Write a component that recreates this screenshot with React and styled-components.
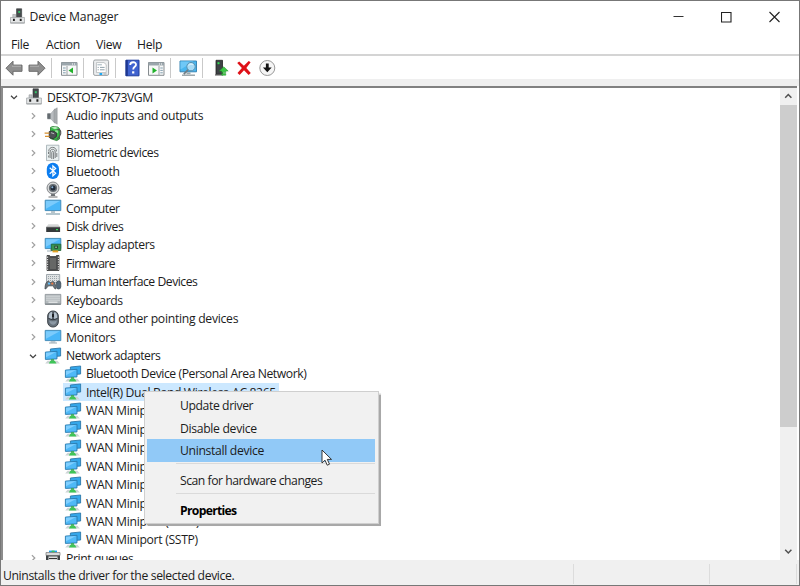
import React from 'react'
import styled, { createGlobalStyle } from 'styled-components'

const GlobalStyle = createGlobalStyle`
  * { box-sizing: border-box; }
  body {
    margin: 0;
    background: #fff;
    overflow: hidden;
  }
`

const Window = styled.div`
  position: relative;
  display: flex;
  flex-direction: column;
  width: 800px;
  height: 586px;
  border: 1px solid #777;
  background: #fff;
  color: #1c1c1c;
  font-family: "Open Sans", "Noto Sans", sans-serif;
  font-size: 12.2px;
  letter-spacing: -0.3px;
  cursor: default;
`

const TitleBar = styled.header`
  display: flex;
  align-items: center;
  height: 31px;
  padding: 0 18px 0 8px;
`

const Title = styled.span`
  flex: 1;
  margin-left: 3.5px;
  letter-spacing: -0.17px;
`

const WindowButtons = styled.div`
  display: flex;
  gap: 36px;
`

const MenuBar = styled.nav`
  display: flex;
  height: 22px;
  padding-left: 10px;
  line-height: 25px;
`

const MenuLabel = styled.span`
  width: ${(p) => p.$width}px;
`

const Toolbar = styled.div`
  display: flex;
  align-items: center;
  height: 32px;
  padding: 0 0 7px 3px;
  border-top: 2px solid #d4d4d4;
  background: linear-gradient(#fff 0 23px, #efefef 23px);
`

const ToolIcon = styled.svg`
  flex: none;
  width: ${(p) => p.$size || 18}px;
  height: 18px;
  margin-left: ${(p) => p.$gap}px;
`

const ToolSeparator = styled.i`
  width: 1px;
  height: 20px;
  margin-left: ${(p) => p.$gap}px;
  background: #c9c9c9;
`

const Body = styled.main`
  display: flex;
  flex: 1;
  min-height: 0;
  margin-right: 2px;
  border-top: 2px solid #808080;
  border-left: 2px solid #8c8c8c;
`

const Tree = styled.div`
  flex: 1;
  padding-top: 0.2px;
  overflow: hidden;
`

const Row = styled.div`
  display: flex;
  align-items: center;
  height: 18.45px;
  padding-left: ${(p) => [4, 23, 43][p.$level]}px;
  white-space: nowrap;
`

const Chevron = styled.svg`
  flex: none;
  width: 14px;
  height: 10px;
  margin-right: 4px;
  fill: none;
  stroke: ${(p) => (p.$open ? '#404040' : '#a0a0a0')};
  stroke-width: 1.25;
`

const DeviceIcon = styled.svg`
  flex: none;
  width: 18px;
  height: 18px;
`

const IconSpace = styled.i`
  flex: none;
  width: 18px;
`

const Label = styled.span`
  display: flex;
  align-items: center;
  height: 18px;
  padding: 0 3px 0 4px;
  letter-spacing: ${(p) => p.$tracking}px;
`

const Device = styled.div`
  display: flex;
  align-items: center;
  margin-left: -1px;
  padding-left: 1px;
  background: ${(p) => (p.$selected ? '#cce8ff' : 'transparent')};
`

const ScrollBar = styled.div`
  display: flex;
  flex-direction: column;
  width: 17px;
  background: #f0f0f0;
`

const ScrollArrow = styled.svg`
  flex: none;
  width: 17px;
  height: 17px;
  fill: none;
  stroke: #505050;
  stroke-width: 1.5;
`

const Thumb = styled.div`
  height: 322px;
  margin-bottom: auto;
  background: #cdcdcd;
`

const StatusBar = styled.footer`
  display: flex;
  align-items: stretch;
  height: 25px;
  padding: 4px 2px 1px 2px;
  background: #f0f0f0;
`

const StatusPane = styled.div`
  flex: ${(p) => (p.$width ? `0 0 ${p.$width}px` : '1')};
  border-right: 1px solid #dcdcdc;
  letter-spacing: -0.37px;
  line-height: 23px;
`

const ContextMenu = styled.div`
  position: absolute;
  left: 143px;
  top: 390px;
  width: 235px;
  height: 133px;
  padding: 2.6px 3px 2px 2px;
  border: 1px solid #cfcfcf;
  background: #f1f1f1;
  box-shadow: 1.5px 1.5px 1px #a8a8a8;
`

const MenuItem = styled.div`
  display: flex;
  align-items: center;
  height: 22.4px;
  padding-left: 33px;
  background: ${(p) => (p.$active ? '#91c9f7' : 'transparent')};
  font-weight: ${(p) => (p.$bold ? 700 : 400)};
  letter-spacing: ${(p) => p.$tracking}px;
  color: ${(p) => (p.$bold ? '#000' : 'inherit')};
`

const MenuDivider = styled.div`
  height: 1px;
  margin: 1.5px 0 5px 29px;
  background: #dadada;
`

const Pointer = styled.svg`
  position: absolute;
  left: 320px;
  top: 448px;
  width: 12px;
  height: 18px;
`

function DesktopArt() {
  return (
    <>
      <path d="M8 .8h5.4v9H8z" fill="#474b4d" stroke="#2d3032" strokeWidth=".6" />
      <path d="M9.8 3.2h2v2h-2z" fill="#36c46a" />
      <path d="M4 6.8h3v4H4z" fill="#c5c8ca" stroke="#8b8e90" strokeWidth=".5" />
      <path d="M1.6 10h14.8v6H1.6z" fill="#e3e5e6" stroke="#9a9da0" strokeWidth=".7" />
      <path d="M4.2 11.3h2v2.4h-2zm7.2 0h2v2.4h-2z" fill="#222" />
      <path d="M1.6 15.8h14.8" stroke="#a4a7a9" />
    </>
  )
}

function NetworkArt() {
  return (
    <>
      <path d="M6.4 2l10.2-1v8L6.4 9.8z" fill="#35a8ec" stroke="#2d78a9" strokeWidth=".9" />
      <path d="M1.4 5.1l11.6-.8v7.6l-11.6.5z" fill="#4fb9f7" stroke="#2a79ad" strokeWidth=".9" />
      <path d="M2 5.8l10-.7-10 5.2z" fill="#80cfff" />
      <path d="M7 12.2h3v2H7z" fill="#35a949" />
      <path d="M1.2 16.4l2.4-2.6h9.8l2.4 2.6z" fill="#cdd4d6" />
      <path d="M4.8 16.6l1.6-2.8h4.4l1.7 2.8z" fill="#3fc557" />
    </>
  )
}

const screen = (
  <>
    <path d="M1.2 2.4h15.6v10.2H1.2z" fill="#49b6f8" stroke="#3f87b2" strokeWidth=".9" />
    <path d="M2 3.2h13.8L2 10.8z" fill="#7bcbfc" />
  </>
)

const art = {
  desktop: <DesktopArt />,
  network: <NetworkArt />,
  audio: (
    <>
      <path d="M3.4 6.2H7l4-4.8v15L7 12.2H3.4z" fill="#8d9396" />
      <path d="M7 6.2l4-4.8v15l-4-4.2z" fill="#b9bdc0" />
      <path d="M10 2.8l3.2-2v16.4L10 15.2z" fill="#a6abad" stroke="#8f9395" strokeWidth=".5" />
      <path d="M3.4 6.7H6v5H3.4z" fill="#646b70" />
    </>
  ),
  battery: (
    <>
      <path d="M6.5 2.4l2-.8 5.5.5 1.5 1.6V14l-2.8 1.6-6.2-2z" fill="#35b845" stroke="#25742d" strokeWidth=".8" />
      <path d="M7 2.6l4-.8 3.7 1.2-3.8 1.2z" fill="#b9e9bc" />
      <path d="M11 5.5l3-.6v3l-3 .8z" fill="#8fe296" />
      <path d="M13.2 5c4-2 4.5 4 2.3 6.4l-2.7 3" fill="none" stroke="#555" strokeWidth="1.2" />
      <path d="M5.2 6.5l3.6-.6 3.6 1.9v3.8l-3.2 2.2-4-1.3z" fill="#4d5154" stroke="#282b2d" strokeWidth=".8" />
      <path d="M.6 8.1h4.8M1 11.4h4.6" stroke="#d6902e" strokeWidth="1.4" />
      <path d="M7 7.7l3.2 1.1" stroke="#b5b9bb" />
    </>
  ),
  biometric: (
    <>
      <path d="M2.5 1.2h12.4v15.4H2.5z" fill="#e9eff0" stroke="#9eabb0" strokeWidth=".8" />
      <path d="M4.7 7.4C4.7 2 12.5 2 12.5 7.4M4.5 10V8M6.1 14V8c0-3.6 5.1-3.6 5.1 0v6M7.8 15V8.4c0-1.5 1.8-1.5 1.8 0V15M12.8 9v4M4.7 11.5v2" fill="none" stroke="#6d7173" strokeWidth=".9" />
    </>
  ),
  bluetooth: (
    <>
      <rect x="2.8" y=".8" width="12.2" height="16.2" rx="6" fill="#0b7df0" />
      <path d="M5.7 5.8l6 5.5-2.8 2.6V3.9l2.8 2.6-6 5.3" fill="none" stroke="#fff" strokeWidth="1.2" />
    </>
  ),
  camera: (
    <>
      <path d="M7.5 12h3l.8 3h-4.6z" fill="#6c7073" />
      <path d="M4.5 16h9" stroke="#999" strokeWidth="1.4" />
      <circle cx="9" cy="7" r="6" fill="#d7d9da" stroke="#777b7e" strokeWidth=".9" />
      <circle cx="9" cy="7" r="4.1" fill="#666d73" />
      <circle cx="9" cy="7" r="2.5" fill="#202c3b" />
      <circle cx="8.3" cy="6.2" r="1" fill="#8db7dc" />
    </>
  ),
  computer: (
    <>
      <path d="M1.2 1.2h15.6v10.4H1.2z" fill="#49b6f8" stroke="#3f87b2" strokeWidth=".9" />
      <path d="M2 2h13.8L2 9.8z" fill="#7bcbfc" />
      <path d="M7 12h4v2H7z" fill="#b7c5cc" />
      <path d="M2 15h14" stroke="#9bb3be" strokeWidth="1.5" />
    </>
  ),
  disk: (
    <>
      <path d="M4.3 7.2h9.8l2 3H2.2z" fill="#d5d7d7" />
      <path d="M2.2 10h13.9v5H2.2z" fill="#35393b" />
      <path d="M2.2 10.1h13.9" stroke="#888" strokeWidth=".7" />
      <path d="M12 12.6h2" stroke="#35dc57" strokeWidth="1.4" />
    </>
  ),
  display: (
    <>
      {screen}
      <path d="M3 15h4v-2" fill="none" stroke="#9dafb8" strokeWidth="1.2" />
      <path d="M7.3 8.2h9.5v6.3H7.3z" fill="#379550" stroke="#205e31" strokeWidth=".8" />
      <path d="M10.4 9.7h3.5v3h-3.5z" fill="#243e30" />
      <path d="M11.3 10.4h1.5v1.5h-1.5z" fill="#9bc1a4" />
      <path d="M8.5 15.4h5.7" stroke="#e5a326" strokeWidth="2" />
    </>
  ),
  firmware: (
    <>
      <path d="M3 1.5h2.5l1 1.1h5l1-1.1H15v15H3z" fill="#4d4e4f" stroke="#252627" strokeWidth=".7" />
      <path d="M3.6 2.6v13.6M14.4 2.6v13.6" stroke="#eee" strokeDasharray="1.2 1.2" />
      <path d="M6 4h6v11H6z" fill="#666766" />
    </>
  ),
  hid: (
    <>
      <path d="M2.5 1.5h13.2v8H2.5z" fill="#e0e3e4" stroke="#8d979d" strokeWidth=".8" />
      <path d="M4 3.5h10.5M4 5.5h10.5M4 7.5h10.5" stroke="#9aa3a8" strokeDasharray="1 1" />
      <path d="M1 16c0-4 1-7.4 3.2-7.7l2.2 1.2 2.8-1c2 1 2.6 4.1 2.6 7.5-2 0-2-3.2-3.2-3.2H4.8C3.3 12.8 3 16 1 16z" fill="#6a747b" stroke="#424a50" strokeWidth=".8" />
      <circle cx="5" cy="10.6" r="1.1" fill="#64c3ff" />
      <circle cx="8.3" cy="10.6" r="1.1" fill="#ee7942" />
      <rect x="12.4" y="8" width="4.4" height="8" rx="2.2" fill="#526778" stroke="#35444f" strokeWidth=".7" />
    </>
  ),
  keyboard: (
    <>
      <path d="M1.2 3.4h15.6v9.8H1.2z" fill="#b3b9bc" stroke="#8a9297" strokeWidth=".8" />
      <path d="M2.5 5.2h13M2.5 7.2h13M2.5 9.2h13" stroke="#f4f6f7" strokeDasharray="1 1" />
      <path d="M4.5 11.2h9" stroke="#eef0f1" strokeWidth="1.1" />
      <path d="M1.2 13.2h15.6" stroke="#737a7e" />
    </>
  ),
  mouse: (
    <>
      <rect x="3.7" y="1" width="10.6" height="16" rx="5" fill="#66717b" stroke="#3c4248" />
      <path d="M5 5.5C5.4 1 9 1.8 8.4 2.2L8 9 4.9 8zM10 2.2c3 .2 3.3 3 3.2 6l-3.1.8z" fill="#b6c3ce" />
      <path d="M5.2 10.4c.5 5 6.8 6.6 7.6 0-2.4 1.2-5 1.2-7.6 0z" fill="#8b98a4" />
      <path d="M9 2v7M4.3 8.3c3 1.8 6 1.8 9.4 0" stroke="#343a40" fill="none" />
      <path d="M9 4v3" stroke="#202327" strokeWidth="2" />
    </>
  ),
  monitor: (
    <>
      {screen}
      <path d="M6.6 13h4.8v1.7H6.6z" fill="#b7c5cc" />
      <path d="M5 15h8" stroke="#9aabb4" />
    </>
  ),
  printer: (
    <>
      <path d="M5 1.6h8v2H5z" fill="#1aa1ec" />
      <path d="M7.6 1.6h3v2h-3z" fill="#3bc15b" />
      <path d="M2 3.5h14v3H2z" fill="#d8dadb" stroke="#777" strokeWidth=".7" />
      <path d="M2 6.5h14v10H2z" fill="#3f4447" />
      <path d="M4.5 7.5h9v9h-9z" fill="#eef0f0" />
      <path d="M5 9.5h8" stroke="#333" strokeWidth="1.2" />
    </>
  ),
}

// icon, label, letter spacing
const categories = [
  ['audio', 'Audio inputs and outputs', -0.29],
  ['battery', 'Batteries', -0.47],
  ['biometric', 'Biometric devices', -0.42],
  ['bluetooth', 'Bluetooth', -0.25],
  ['camera', 'Cameras', -0.58],
  ['computer', 'Computer', -0.47],
  ['disk', 'Disk drives', -0.37],
  ['display', 'Display adapters', -0.38],
  ['firmware', 'Firmware', -0.58],
  ['hid', 'Human Interface Devices', -0.47],
  ['keyboard', 'Keyboards', -0.38],
  ['mouse', 'Mice and other pointing devices', -0.28],
  ['monitor', 'Monitors', -0.2],
]

const adapters = [
  ['Bluetooth Device (Personal Area Network)', -0.44],
  ['Intel(R) Dual Band Wireless-AC 8265', -0.38],
  ['WAN Miniport (IKEv2)'],
  ['WAN Miniport (IP)'],
  ['WAN Miniport (IPv6)'],
  ['WAN Miniport (L2TP)'],
  ['WAN Miniport (Network Monitor)'],
  ['WAN Miniport (PPPOE)'],
  ['WAN Miniport (PPTP)'],
  ['WAN Miniport (SSTP)'],
]

function TreeRow({ icon, text, tracking, level = 1, open }) {
  return (
    <Row $level={level}>
      <Chevron $open={open} viewBox="0 0 14 10">
        {open ? <path d="M4 3.8l3 2.8 3-2.8" /> : <path d="M5.9 2.1L8.8 5 5.9 7.9" />}
      </Chevron>
      <DeviceIcon viewBox="0 0 18 18">{art[icon]}</DeviceIcon>
      <Label $tracking={tracking}>{text}</Label>
    </Row>
  )
}

function Arrow({ gap, flip }) {
  return (
    <ToolIcon $gap={gap} $size={20} viewBox="0 0 20 18">
      <path
        d="M2 9.2L9 2.2v3.9h9v6.2H9v3.9z"
        fill="#8f8f8f"
        stroke="#6b6b6b"
        strokeLinejoin="round"
        transform={flip ? 'matrix(-1 0 0 1 20 0)' : undefined}
      />
      <path d={flip ? 'M3 7.2h9' : 'M8 7.2h9'} stroke="#b6b6b6" />
    </ToolIcon>
  )
}

// small console window with a green arrow in one of its panes
function PaneIcon({ gap, right }) {
  return (
    <ToolIcon $gap={gap} viewBox="0 0 18 18">
      <path d="M1.5 3.5h15.5v12.8H1.5z" fill="#f7f8f8" stroke="#868c90" />
      <path d="M1.5 3.5h15.5v3H1.5z" fill="#9ba6ac" />
      <path d="M12 5h1m1 0h1" stroke="#fff" />
      <path d={right ? 'M12 7v9' : 'M7 7v9'} stroke="#9ca1a4" />
      <path d={right ? 'M13.3 9h2.5m-2.5 2.4h2.5m-2.5 2.4h2.5' : 'M3 9h2.7M3 11.4h2.7M3 13.8h2.7'} stroke="#83a0b0" />
      <path d={right ? 'M5.5 8.5v6l4.5-3z' : 'M13 8.5v6l-4.5-3z'} fill="#22b12b" />
    </ToolIcon>
  )
}

function ToolbarIcons() {
  return (
    <Toolbar>
      <Arrow gap={0} />
      <Arrow gap={3} flip />
      <ToolSeparator $gap={4} />
      <PaneIcon gap={8} />
      <ToolSeparator $gap={5} />
      <ToolIcon $gap={8} viewBox="0 0 18 18">
        <rect x="1.6" y="1" width="15" height="15.4" rx="1.5" fill="#eceeef" stroke="#9da2a5" />
        <path d="M4.4 3.6h7.6l2.2 2v8H4.4z" fill="#fff" stroke="#b1b6b9" strokeWidth=".8" />
        <path d="M5.4 5.8h4.5" stroke="#9fb1bb" />
        <path d="M5.6 8.4h1.2m1.2 0h4.6M5.6 10.8h1.2m1.2 0h4.6" stroke="#8296a1" strokeWidth=".9" />
        <path d="M7.5 14h2.7v2H7.5z" fill="#20a9f2" />
        <path d="M11.4 15h3.2" stroke="#b5babd" strokeWidth="1.4" />
      </ToolIcon>
      <ToolSeparator $gap={5} />
      <ToolIcon $gap={7} viewBox="0 0 18 18">
        <path d="M3 1.2h13v15.6H3z" fill="#3f62cf" stroke="#203f9e" />
        <path d="M2.6 1h2.2v16H2.6z" fill="#1d378f" />
        <path d="M7.2 6c0-3.7 6.2-3.6 5.8-.2-.2 2-2.8 2-2.8 4.6" fill="none" stroke="#fff" strokeWidth="1.8" />
        <path d="M9.1 12.3h2.2v2.2H9.1z" fill="#fff" />
      </ToolIcon>
      <PaneIcon gap={6} right />
      <ToolSeparator $gap={5} />
      <ToolIcon $gap={7} $size={20} viewBox="0 0 20 18">
        <path d="M2 2h16.5v10.8H2z" fill="#49b6ef" stroke="#3b87b5" />
        <path d="M2.5 2.5h13l-13 8z" fill="#6fc8f7" />
        <path d="M8.5 13.4h4v1.8h-4z" fill="#9ba9af" />
        <path d="M4 16.2h13" stroke="#8e999e" strokeWidth="1.3" />
        <path d="M10.2 10.6l-4.4 4.6" stroke="#6f7d85" strokeWidth="1.7" />
        <circle cx="13" cy="7.6" r="4.2" fill="#a8dbf5" stroke="#5c93b2" />
        <path d="M10.8 6.6c1-2 3-1.8 4-.8" stroke="#eefaff" fill="none" />
      </ToolIcon>
      <ToolSeparator $gap={4} />
      <ToolIcon $gap={9} viewBox="0 0 18 18">
        <path d="M4 1.3h6.5v14H4z" fill="#3e4245" stroke="#222" strokeWidth=".8" />
        <path d="M5.5 3.2h2v2h-2z" fill="#34dd55" />
        <path d="M3 15.9h8" stroke="#555" strokeWidth="1.2" />
        <path d="M11.8 7.8l4.4 4.2h-2.4v1.6H9.8V12H7.4zM9.8 14.6h4v1.6h-4z" fill="#3dc646" stroke="#23972c" strokeWidth=".5" />
      </ToolIcon>
      <ToolIcon $gap={5} viewBox="0 0 18 18">
        <path d="M2.2 4.1l2-1.7 4.7 4.3 4.8-4.8 1.9 1.4L11.3 9l4.5 5-2.2 1.9L9 11.2l-4.4 4.7L2.5 14l4.4-5z" fill="#df1118" />
      </ToolIcon>
      <ToolIcon $gap={5} viewBox="0 0 18 18">
        <circle cx="9.3" cy="9" r="7.5" fill="#f5f5f5" stroke="#989898" />
        <path d="M7.9 4.6h2.8v4h3L9.3 13.2 4.9 8.6h3z" fill="#111" />
      </ToolIcon>
    </Toolbar>
  )
}

export default function App() {
  return (
    <Window>
      <GlobalStyle />
      <TitleBar>
        <svg width="17" height="17" viewBox="0 0 18 18">{art.desktop}</svg>
        <Title>Device Manager</Title>
        <WindowButtons>
          <svg width="12" height="12"><path d="M.5 5.5h10" stroke="#333" /></svg>
          <svg width="12" height="12"><path d="M.5 1.5h9.5v9.5H.5z" fill="none" stroke="#222" strokeWidth="1.1" /></svg>
          <svg width="12" height="12"><path d="M.5 1l10 10m0-10l-10 10" stroke="#222" strokeWidth="1.1" /></svg>
        </WindowButtons>
      </TitleBar>
      <MenuBar>
        <MenuLabel $width={35}>File</MenuLabel>
        <MenuLabel $width={50}>Action</MenuLabel>
        <MenuLabel $width={41}>View</MenuLabel>
        <MenuLabel>Help</MenuLabel>
      </MenuBar>
      <ToolbarIcons />
      <Body>
        <Tree>
          <TreeRow icon="desktop" text="DESKTOP-7K73VGM" tracking={-0.46} level={0} open />
          {categories.map(([icon, text, tracking]) => (
            <TreeRow key={text} icon={icon} text={text} tracking={tracking} />
          ))}
          <TreeRow icon="network" text="Network adapters" tracking={-0.49} open />
          {adapters.map(([name, tracking = -0.31], i) => (
            <Row key={name} $level={2}>
              <IconSpace />
              <Device $selected={i === 1}>
                <DeviceIcon viewBox="0 0 18 18">{art.network}</DeviceIcon>
                <Label $tracking={tracking}>{name}</Label>
              </Device>
            </Row>
          ))}
          <TreeRow icon="printer" text="Print queues" tracking={-0.4} />
        </Tree>
        <ScrollBar>
          <ScrollArrow viewBox="0 0 17 17"><path d="M5.2 9.8l3.1-3.2 3.1 3.2" /></ScrollArrow>
          <Thumb />
          <ScrollArrow viewBox="0 0 17 17"><path d="M5.2 6.8l3.1 3.2 3.1-3.2" /></ScrollArrow>
        </ScrollBar>
      </Body>
      <StatusBar>
        <StatusPane $width={571}>Uninstalls the driver for the selected device.</StatusPane>
        <StatusPane $width={136} />
        <StatusPane />
      </StatusBar>
      <ContextMenu>
        <MenuItem $tracking={-0.4}>Update driver</MenuItem>
        <MenuItem $tracking={-0.32}>Disable device</MenuItem>
        <MenuItem $tracking={-0.33} $active>Uninstall device</MenuItem>
        <MenuDivider />
        <MenuItem $tracking={-0.48}>Scan for hardware changes</MenuItem>
        <MenuDivider />
        <MenuItem $tracking={-0.7} $bold>Properties</MenuItem>
      </ContextMenu>
      <Pointer viewBox="0 0 12 18">
        <path d="M1 1v13l3-2.8 2.2 5 2.3-1-2.2-4.8h4.2z" fill="#fff" stroke="#222" strokeWidth=".9" />
      </Pointer>
    </Window>
  )
}
